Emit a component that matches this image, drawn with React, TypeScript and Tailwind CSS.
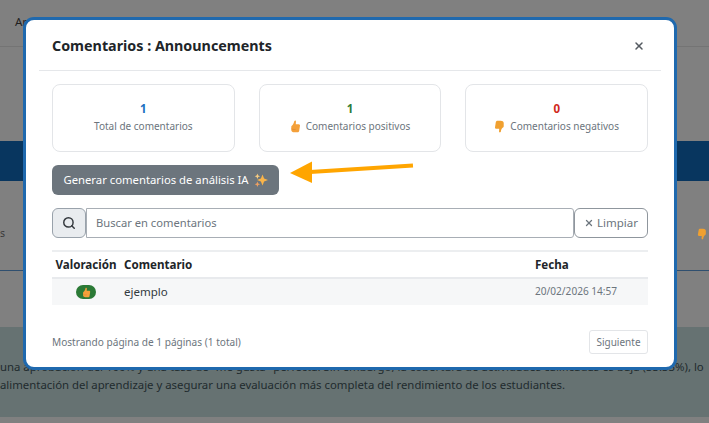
import React from "react";
import { Search, X } from "lucide-react";

const F = { fontFamily: '"Noto Sans", "Open Sans", sans-serif' };

function ThumbUp({ className = "" }: { className?: string }) {
  return (
    <svg viewBox="0 0 12 14" className={className}>
      <path d="M5.2 0.6c.8-.3 1.4.3 1.3 1.2L6.3 4.6h3.2c1 0 1.6.8 1.4 1.7l-.9 5.6c-.2.9-.9 1.5-1.8 1.5H4.6c-1.6 0-3.2-.8-3.2-2.6V7.4c0-.9.6-1.3 1.2-1.8C3.8 4.6 4.4 2.6 4.5 1.6c0-.4.3-.8.7-1z" fill="#f4a03a" />
      <path d="M1.6 9.5c1.2.8 3 .9 4.6.6" stroke="#d9812a" strokeWidth="0.6" fill="none" />
    </svg>
  );
}

function ThumbDown({ className = "" }: { className?: string }) {
  return (
    <svg viewBox="0 0 12 14" className={className}>
      <path d="M6.8 13.4c-.8.3-1.4-.3-1.3-1.2l.2-2.8H2.5c-1 0-1.6-.8-1.4-1.7L2 2.1C2.2 1.2 2.9.6 3.8.6h3.6c1.6 0 3.2.8 3.2 2.6v3.4c0 .9-.6 1.3-1.2 1.8-1.2 1-1.8 3-1.9 4 0 .4-.3.8-.7 1z" fill="#f0a030" />
    </svg>
  );
}

function Sparkle({ className = "" }: { className?: string }) {
  return (
    <svg viewBox="0 0 14 14" className={className}>
      <path d="M8.5 1.5l1.6 3.9 3.9 1.6-3.9 1.6-1.6 3.9-1.6-3.9L3 7l3.9-1.6z" fill="#f9b44a" />
      <path d="M3.4 0.5l.8 1.9 1.9.8-1.9.8-.8 1.9-.8-1.9-1.9-.8 1.9-.8z" fill="#f8cc80" />
      <path d="M3.4 8.6l.8 1.9 1.9.8-1.9.8-.8 1.9-.8-1.9-1.9-.8 1.9-.8z" fill="#f0a060" />
    </svg>
  );
}

function Stat({ value, color, label, icon }: { value: string; color: string; label: string; icon?: React.ReactNode }) {
  return (
    <div className="flex flex-col items-center justify-center h-[68px] pb-[2px] rounded-[8px] border border-[#e3e5e8] bg-white">
      <div className={`text-[11.5px] leading-[15px] font-bold ${color}`}>{value}</div>
      <div className="mt-[3px] flex items-center gap-[5px] text-[10px] leading-[15px] text-[#6c757d]">
        {icon}
        <span>{label}</span>
      </div>
    </div>
  );
}

export default function App() {
  return (
    <div style={F} className="relative w-[709px] h-[423px] overflow-hidden bg-[#808080]">
      <div className="flex flex-col h-full">
        <div className="h-[47px] border-b border-[#747474] flex items-center pl-[15px] pb-[2px] text-[11.5px] text-[#1f1f1f]">Análisis</div>
        <div className="h-[94px]" />
        <div className="h-[40px] bg-[#08365f]" />
        <div className="h-[90px] border-b border-[#2f4f6f] flex items-center justify-between pl-0 pr-[2px] pt-[16px] text-[10.5px] text-[#3a3a3a]">
          <span>s</span>
          <ThumbDown className="w-[10px] h-[12px]" />
        </div>
        <div className="h-[56px]" />
        <div className="h-[90px] bg-[#667272] pt-[31px] text-[11.36px] leading-[18px] text-[#1f2b2e] whitespace-nowrap">
          <div>una aprobación del 100% y una tasa de "me gusta" perfecta. Sin embargo, la cobertura de actividades calificadas es baja (33.33%), lo</div>
          <div>alimentación del aprendizaje y asegurar una evaluación más completa del rendimiento de los estudiantes.</div>
        </div>
      </div>

      <div className="absolute left-[23px] top-[17px] w-[654px] h-[353px] rounded-[11px] border-[3px] border-[#1f69ae] bg-white">
        <div className="mx-[13px] h-[51px] border-b border-[#e5e7ea] flex items-center justify-between pl-[13px] pr-[16px] pt-[1px]">
          <h2 className="text-[14.3px] font-bold text-[#212529]">Comentarios : Announcements</h2>
          <X className="w-[12px] h-[12px] text-[#555b61]" strokeWidth={3} />
        </div>

        <div className="px-[26px] pt-[13px]">
          <div className="grid grid-cols-3 gap-[24px]">
            <Stat value="1" color="text-[#1a6fc0]" label="Total de comentarios" />
            <Stat value="1" color="text-[#2e7d3a]" label="Comentarios positivos" icon={<ThumbUp className="w-[11px] h-[13px]" />} />
            <Stat value="0" color="text-[#d0281c]" label="Comentarios negativos" icon={<ThumbDown className="w-[11px] h-[13px]" />} />
          </div>

          <button className="mt-[13px] h-[30px] w-[227px] rounded-[6px] bg-[#6c757d] text-white text-[11.3px] flex items-center justify-center gap-[5px]">
            <span>Generar comentarios de análisis IA</span>
            <Sparkle className="w-[14px] h-[14px]" />
          </button>

          <div className="mt-[13px] flex h-[30px]">
            <div className="w-[34px] rounded-[6px] border border-[#99a2ab] bg-[#e9ecef] flex items-center justify-center">
              <Search className="w-[14px] h-[14px] text-[#33383d]" strokeWidth={2.5} />
            </div>
            <div className="flex-1 border border-[#a8aeb5] rounded-r-[3px] flex items-center pl-[9px] text-[11.2px] text-[#6c757d]">Buscar en comentarios</div>
            <div className="w-[74px] rounded-[6px] border border-[#8f969d] flex items-center justify-center gap-[3px] text-[11.5px] text-[#6c757d]">
              <X className="w-[10px] h-[10px]" strokeWidth={3} />
              <span>Limpiar</span>
            </div>
          </div>

          <div className="mt-[12px] border-t-2 border-[#eceef0]">
            <div className="flex h-[27px] items-center border-b-2 border-[#e8eaed] text-[11.6px] font-bold text-[#212529]">
              <div className="w-[68px] mr-[4px] text-center">Valoración</div>
              <div className="flex-1">Comentario</div>
              <div className="w-[113px]">Fecha</div>
            </div>
            <div className="flex h-[26px] items-center bg-[#f6f7f8]">
              <div className="w-[68px] mr-[4px] flex justify-center">
                <div className="w-[20px] h-[14px] rounded-full bg-[#2b7a36] flex items-center justify-center">
                  <ThumbUp className="w-[9px] h-[11px]" />
                </div>
              </div>
              <div className="flex-1 text-[11.5px] text-[#333a40]">ejemplo</div>
              <div className="w-[113px] text-[10.1px] text-[#6c757d]">20/02/2026 14:57</div>
            </div>
          </div>

          <div className="mt-[25px] flex items-center justify-between">
            <span className="pt-[2px] text-[10.1px] text-[#6c757d]">Mostrando página de 1 páginas (1 total)</span>
            <div className="w-[59px] h-[24px] rounded-[3px] border border-[#e3e5e8] flex items-center justify-center text-[10px] text-[#6c757d]">Siguiente</div>
          </div>
        </div>
      </div>

      <svg className="absolute left-[285px] top-[155px] w-[135px] h-[35px]" viewBox="0 0 135 35">
        <path d="M128 10.5L25 17" stroke="#ffa500" strokeWidth="4" fill="none" />
        <path d="M5 18L27 6.5V28z" fill="#ffa500" />
      </svg>
    </div>
  );
}
